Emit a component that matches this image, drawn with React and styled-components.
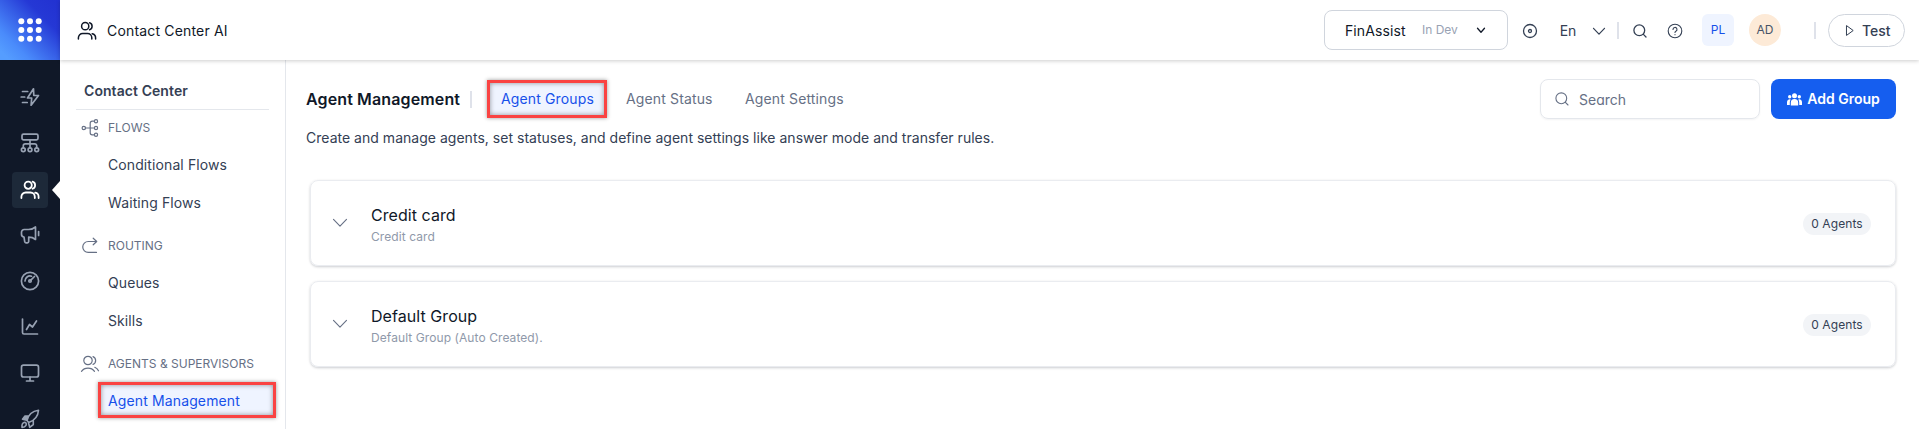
import React from "react";
import styled, { createGlobalStyle, css } from "styled-components";

const GlobalStyle = createGlobalStyle`
  *, *::before, *::after { box-sizing: border-box; }
  body {
    margin: 0;
    overflow: hidden;
    background: #fff;
    color: #101828;
    font-family: Inter, "Liberation Sans", sans-serif;
    font-size: 14px;
    line-height: 20px;
  }
  svg { display: block; flex: none; overflow: visible; }
`;

const Shell = styled.div`
  display: flex;
  height: 429px;
  overflow: hidden;
`;

const Rail = styled.nav`
  flex: none;
  width: 60px;
  height: 100%;
  overflow: hidden;
  background: #101828;
`;

const AppSwitcher = styled.div`
  display: grid;
  place-items: center;
  height: 60px;
  color: #fff;
  background: linear-gradient(45deg, #559dff 8%, #4a8bfb 25%, #2538d5 72%, #2231d0 100%);
`;

const RailList = styled.div`
  display: flex;
  flex-direction: column;
  align-items: center;
  gap: 10px;
  padding-top: 20px;
`;

const RailItem = styled.div`
  position: relative;
  display: grid;
  place-items: center;
  flex: none;
  width: 36px;
  height: 36px;
  padding-bottom: ${(p) => (p.$active ? 0 : 2)}px;
  border-radius: 4px;
  color: ${(p) => (p.$active ? "#fff" : "#98a2b3")};
  ${(p) =>
    p.$active &&
    css`
      background: #1d2939;
      &::after {
        content: "";
        position: absolute;
        top: 9px;
        right: -12px;
        border: 9px solid transparent;
        border-right: 8px solid #fff;
        border-left: 0;
      }
    `}
`;

const Page = styled.div`
  flex: 1;
  min-width: 0;
  display: flex;
  flex-direction: column;
`;

const TopBar = styled.header`
  position: relative;
  z-index: 1;
  flex: none;
  display: flex;
  align-items: center;
  justify-content: space-between;
  height: 60px;
  padding: 0 14px 0 17px;
  background: #fff;
  box-shadow: 0 1px 4px rgba(0, 0, 0, 0.2);
`;

const Brand = styled.div`
  display: flex;
  align-items: center;
  gap: 10px;
  padding-top: 2px;
  font-size: 14px;
  letter-spacing: 0.17px;
`;

const Tools = styled.div`
  display: flex;
  align-items: center;
`;

const BotPicker = styled.div`
  display: flex;
  align-items: center;
  width: 184px;
  height: 40px;
  padding: 2px 22px 0 20px;
  border: 1px solid #d0d5dd;
  border-radius: 8px;
  svg { margin-top: -2px; }
`;

const BotName = styled.span`
  width: 77px;
  letter-spacing: 0.1px;
`;

const BotStage = styled.span`
  flex: 1;
  margin-top: -3px;
  font-size: 12px;
  color: #98a2b3;
`;

const Tool = styled.div`
  display: grid;
  place-items: center;
  flex: none;
  width: ${(p) => p.$width}px;
  height: 20px;
  margin: 2px 0 0 ${(p) => p.$gap}px;
  color: #344054;
`;

const Divider = styled.span`
  flex: none;
  width: 2px;
  height: 17px;
  margin-left: ${(p) => p.$gap}px;
  background: #dfe2ea;
`;

const Chip = styled.span`
  display: grid;
  place-items: center;
  width: 32px;
  height: 32px;
  margin-left: ${(p) => p.$gap}px;
  border-radius: ${(p) => (p.$round ? "50%" : "6px")};
  background: ${(p) => (p.$round ? "#fdead7" : "#eff4ff")};
  color: ${(p) => (p.$round ? "#475467" : "#1650ea")};
  font-size: 12px;
`;

const TestButton = styled.button`
  display: flex;
  align-items: center;
  gap: 8px;
  width: 77px;
  height: 33px;
  margin: 1px 0 0 12px;
  padding: 0 0 0 17px;
  border: 1px solid #d0d5dd;
  border-radius: 17px;
  background: #fff;
  color: #344054;
  font: 500 14px/20px Inter, "Liberation Sans", sans-serif;
`;

const Body = styled.div`
  flex: 1;
  display: flex;
  min-height: 0;
`;

const Sidebar = styled.aside`
  flex: none;
  width: 226px;
  padding-top: 21px;
  border-right: 1px solid #e4e7ec;
  overflow: hidden;
`;

const SidebarTitle = styled.h2`
  width: 193px;
  height: 29px;
  margin: 0 0 0 16px;
  padding-left: 8px;
  border-bottom: 1px solid #e4e7ec;
  color: #344054;
  font-size: 14px;
  font-weight: 600;
  letter-spacing: 0.07px;
  line-height: 20px;
`;

const Section = styled.section`
  margin-bottom: 6px;
`;

const SectionTitle = styled.div`
  display: flex;
  align-items: center;
  height: 36px;
  padding-left: 20px;
  color: #667085;
  font-size: 12px;
  svg { margin-right: 8px; }
`;

const NavItem = styled.a`
  display: flex;
  align-items: center;
  height: 38px;
  padding-left: 48px;
  color: #344054;
  letter-spacing: 0.1px;
`;

const CurrentNavItem = styled.a`
  display: flex;
  align-items: center;
  width: 178px;
  height: 36px;
  margin-left: 38px;
  padding: 1px 0 0 7px;
  border: 3px solid #fa4342;
  background: #eff4ff;
  color: #1650ea;
  letter-spacing: 0.13px;
  box-shadow: 0 0 4px rgba(0, 0, 0, 0.4), inset 0 0 5px rgba(0, 0, 0, 0.4);
`;

const Main = styled.main`
  flex: 1;
  min-width: 0;
  padding: 19px 23px 0 20px;
`;

const PageHead = styled.div`
  display: flex;
  align-items: center;
  height: 40px;
`;

const PageTitle = styled.h1`
  width: 164px;
  margin: 0;
  font-size: 16px;
  font-weight: 600;
  letter-spacing: 0.13px;
  line-height: 24px;
`;

const Tabs = styled.div`
  flex: 1;
  display: flex;
  align-items: center;
  letter-spacing: 0.14px;
`;

const Tab = styled.a`
  width: ${(p) => p.$width}px;
  color: #667085;
`;

const CurrentTab = styled.a`
  display: grid;
  place-items: center;
  width: 120px;
  height: 38px;
  margin: 0 19px 0 15px;
  padding-left: 1px;
  border: 3px solid #fa4342;
  background: #eff4ff;
  color: #1650ea;
  box-shadow: 0 0 4px rgba(0, 0, 0, 0.4), inset 0 0 5px rgba(0, 0, 0, 0.4);
`;

const SearchBox = styled.div`
  display: flex;
  align-items: center;
  gap: 10px;
  width: 220px;
  height: 40px;
  padding-left: 14px;
  border: 1px solid #e4e7ec;
  border-radius: 8px;
  color: #667085;
  box-shadow: 0 1px 2px rgba(16, 24, 40, 0.05);
  span { padding-top: 2px; font-feature-settings: "cv11"; }
`;

const AddButton = styled.button`
  display: flex;
  align-items: center;
  justify-content: center;
  gap: 5px;
  width: 125px;
  height: 40px;
  margin-left: 11px;
  padding: 0;
  border: 0;
  border-radius: 8px;
  background: #155eef;
  color: #fff;
  font: 600 14px/20px Inter, "Liberation Sans", sans-serif;
`;

const Summary = styled.p`
  margin: 9px 0 32px;
  color: #344054;
  letter-spacing: 0.022px;
`;

const GroupList = styled.div`
  display: flex;
  flex-direction: column;
  gap: 15px;
  padding-left: 4px;
`;

const GroupCard = styled.article`
  display: flex;
  align-items: center;
  height: 86px;
  padding: 0 24px 0 22px;
  border: 1px solid #eaecf0;
  border-radius: 8px;
  color: #667085;
  box-shadow: 0 1px 3px rgba(16, 24, 40, 0.14), 0 1px 2px rgba(16, 24, 40, 0.08);
`;

const GroupText = styled.div`
  flex: 1;
  margin-left: 24px;
  padding-top: 2px;
`;

const GroupName = styled.h3`
  margin: 0 0 1px;
  color: #101828;
  font-size: 16px;
  font-weight: 400;
  letter-spacing: 0.06px;
  line-height: 24px;
`;

const GroupNote = styled.p`
  margin: 0;
  color: #8f99aa;
  font-size: 12px;
  letter-spacing: 0.08px;
  line-height: 18px;
`;

const Count = styled.span`
  display: grid;
  place-items: center;
  width: 68px;
  height: 22px;
  margin-top: 1px;
  border-radius: 11px;
  background: #f2f4f7;
  color: #344054;
  font-size: 12px;
  letter-spacing: 0.1px;
  line-height: 18px;
`;

function Icon({ w = 20, h = w, sw = 1.5, children }) {
  return (
    <svg width={w} height={h} viewBox={`0 0 ${w} ${h}`} fill="none" stroke="currentColor"
      strokeWidth={sw} strokeLinecap="round" strokeLinejoin="round">
      {children}
    </svg>
  );
}

const Users = ({ sw }) => (
  <Icon sw={sw}>
    <circle cx="8.2" cy="5.2" r="3.6" />
    <path d="M12.6 1.7a3.7 3.7 0 0 1 0 7M1.4 18v-1.2a4.3 4.3 0 0 1 4.3-4.3h4.8a4.3 4.3 0 0 1 4.3 4.3V18M15.200 12.700a4.200 4.200 0 0 1 3.400 4.200V18" />
  </Icon>
);

const Chevron = ({ w = 12, h = 6, sw = 1.2 }) => (
  <Icon w={w} h={h} sw={sw}><path d={`M.5 .3L${w / 2} ${h - 0.3}L${w - 0.5} .3`} /></Icon>
);

const Magnifier = ({ sw }) => (
  <Icon w={14} sw={sw}><circle cx="6.3" cy="6.3" r="5.4" /><path d="M10.4 10.4L13 13" /></Icon>
);

const railIcons = [
  <Icon key="automation" sw={1.7}>
    <path d="M13.5 1.8L7.5 11h4.2l-.6 7.2L18.5 8.5h-4.7z" />
    <path d="M2.5 4.5h5.2M1.2 10h3.5M2.5 15.5h4.7" />
  </Icon>,
  <Icon key="flows" sw={1.7}>
    <rect x="2" y="1.2" width="16" height="5.6" rx="1.5" />
    <path d="M10 6.8v8M3.3 15v-2.2a2 2 0 0 1 2-2h9.4a2 2 0 0 1 2 2V15" />
    <circle cx="3.3" cy="16.8" r="1.9" /><circle cx="10" cy="16.8" r="1.9" /><circle cx="16.7" cy="16.8" r="1.9" />
  </Icon>,
  <Users key="contact" sw={1.8} />,
  <Icon key="campaigns" sw={1.7}>
    <path d="M15.500 2v12.500c-2-1.600-4.200-2.300-6.800-2.300v4.300a1.300 1.300 0 0 1-1.300 1.300H6a1.300 1.300 0 0 1-1.300-1.100L4 12a2.700 2.700 0 0 1-2.500-2.700V7.200a2.700 2.700 0 0 1 2.700-2.700H8.500c2.600 0 5-.8 7-2.500zM18.600 6.500v4" />
  </Icon>,
  <Icon key="dashboard" sw={1.7}>
    <circle cx="10" cy="10" r="8.6" />
    <path d="M5 10a5 5 0 0 1 6.500-4.800M10.800 9.200L14.500 5.500" /><circle cx="10" cy="10" r="1.200" />
  </Icon>,
  <Icon key="analytics" sw={1.7}><path d="M2.500 2v13.500a1.500 1.500 0 0 0 1.500 1.500h13.500M6.500 12.500l3-5 3 2.500 4-6" /></Icon>,
  <Icon key="console" sw={1.7}><rect x="1.500" y="2.200" width="17" height="11.800" rx="2" /><path d="M10 14v4M6.500 18h7" /></Icon>,
  <Icon key="launch" sw={1.6}>
    <path d="M7 11.500c1-4.500 4.500-9.300 11.500-10.300-.5 7-5.500 10.800-9.800 12.300zM13.300 11.800v3.700l-3.600 2.800-1.200-4.500M2 18.500c-.3-3 .5-4.500 2-5s3 1 2 2.800c-.7 1.200-2 2-4 2.200z" />
    <path d="M8 7H5L2.500 10.200l4.300 1z" fill="currentColor" />
  </Icon>,
];

const sections = [
  {
    title: "FLOWS",
    icon: (
      <Icon sw={1.2}>
        <circle cx="3.8" cy="10" r="1.7" /><circle cx="16" cy="3.2" r="1.6" />
        <circle cx="16" cy="10" r="1.6" /><circle cx="16" cy="16.8" r="1.6" />
        <path d="M5.5 10h8.900M14.400 3.200h-2.200a2 2 0 0 0-2 2v9.600a2 2 0 0 0 2 2h2.200" />
      </Icon>
    ),
    items: ["Conditional Flows", "Waiting Flows"],
  },
  {
    title: "ROUTING",
    icon: <Icon sw={1.2}><path d="M16.500 5.500H8.200a5.200 5.200 0 0 0 0 10.900h8.300M13.200 2.200l3.500 3.300-3.500 3.300" /></Icon>,
    items: ["Queues", "Skills"],
  },
  {
    title: "AGENTS & SUPERVISORS",
    icon: (
      <Icon sw={1.2}>
        <circle cx="8" cy="6.500" r="4.200" />
        <path d="M1.500 17.300c3-4.300 10-4.300 13 0M13 2.600a4.200 4.200 0 0 1 0 7.800M14.800 13.300c1.500.6 2.900 1.900 3.700 3.500" />
      </Icon>
    ),
    current: "Agent Management",
    items: [],
  },
];

const groups = [
  { name: "Credit card", note: "Credit card" },
  { name: "Default Group", note: "Default Group (Auto Created)." },
];

const dotSteps = [3.3, 12, 20.7];

export default function App() {
  return (
    <Shell>
      <GlobalStyle />
      <Rail>
        <AppSwitcher>
          <svg width="24" height="24" fill="currentColor">
            {dotSteps.flatMap((y) => dotSteps.map((x) => <circle key={`${x}-${y}`} cx={x} cy={y} r="3" />))}
          </svg>
        </AppSwitcher>
        <RailList>
          {railIcons.map((icon, i) => <RailItem key={i} $active={i === 2}>{icon}</RailItem>)}
        </RailList>
      </Rail>
      <Page>
        <TopBar>
          <Brand><Users />Contact Center AI</Brand>
          <Tools>
            <BotPicker>
              <BotName>FinAssist</BotName>
              <BotStage>In Dev</BotStage>
              <Chevron w={8} h={4.5} sw={1.3} />
            </BotPicker>
            <Tool $width={16} $gap={14}>
              <Icon w={16} sw={1.3}><circle cx="8" cy="8" r="6.500" /><circle cx="8" cy="8" r="1.500" /></Icon>
            </Tool>
            <Tool $width={18} $gap={21}>En</Tool>
            <Tool $width={12} $gap={16}><Chevron w={12} h={6.5} /></Tool>
            <Divider $gap={12} />
            <Tool $width={14} $gap={14}><Magnifier sw={1.3} /></Tool>
            <Tool $width={16} $gap={20}>
              <Icon w={16} sw={1.1}>
                <circle cx="8" cy="8" r="6.800" />
                <path d="M6 6.400a2 2 0 1 1 2.900 1.800c-.6.300-.9.600-.9 1.300M8 11.500v.2" />
              </Icon>
            </Tool>
            <Chip $gap={19}>PL</Chip>
            <Chip $gap={15} $round>AD</Chip>
            <Divider $gap={33} />
            <TestButton>
              <Icon w={8} h={11} sw={1}><path d="M.8 .8L7.200 5.500L.8 10.200z" /></Icon>
              Test
            </TestButton>
          </Tools>
        </TopBar>
        <Body>
          <Sidebar>
            <SidebarTitle>Contact Center</SidebarTitle>
            {sections.map((s) => (
              <Section key={s.title}>
                <SectionTitle>{s.icon}{s.title}</SectionTitle>
                {s.items.map((item) => <NavItem key={item}>{item}</NavItem>)}
                {s.current && <CurrentNavItem>{s.current}</CurrentNavItem>}
              </Section>
            ))}
          </Sidebar>
          <Main>
            <PageHead>
              <PageTitle>Agent Management</PageTitle>
              <Tabs>
                <Divider $gap={0} />
                <CurrentTab>Agent Groups</CurrentTab>
                <Tab $width={119}>Agent Status</Tab>
                <Tab $width={110}>Agent Settings</Tab>
              </Tabs>
              <SearchBox><Magnifier sw={1.1} /><span>Search</span></SearchBox>
              <AddButton>
                <svg width="15" height="13" fill="currentColor">
                  <circle cx="7.500" cy="2.700" r="2.500" /><circle cx="2.700" cy="3.700" r="1.700" /><circle cx="12.300" cy="3.700" r="1.700" />
                  <path d="M3.800 12.500V9.800a3.700 3.700 0 0 1 7.400 0v2.700zM0 12V9a2.700 2.700 0 0 1 3.700-2.500A5 5 0 0 0 2.800 9.500V12zM15 12V9a2.700 2.700 0 0 0-3.700-2.500 5 5 0 0 1 .9 3V12z" />
                </svg>
                Add Group
              </AddButton>
            </PageHead>
            <Summary>Create and manage agents, set statuses, and define agent settings like answer mode and transfer rules.</Summary>
            <GroupList>
              {groups.map((g) => (
                <GroupCard key={g.name}>
                  <Chevron w={14} h={7.5} sw={1.1} />
                  <GroupText>
                    <GroupName>{g.name}</GroupName>
                    <GroupNote>{g.note}</GroupNote>
                  </GroupText>
                  <Count>0 Agents</Count>
                </GroupCard>
              ))}
            </GroupList>
          </Main>
        </Body>
      </Page>
    </Shell>
  );
}
